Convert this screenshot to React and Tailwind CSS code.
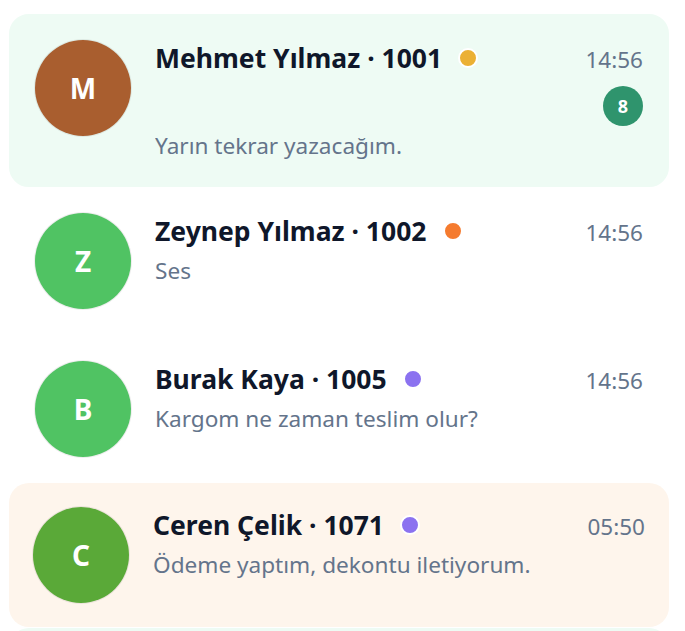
const chats = [
  {
    id: 1,
    initial: 'M',
    name: 'Mehmet Yılmaz · 1001',
    time: '14:56',
    preview: 'Yarın tekrar yazacağım.',
    avatar: 'bg-[#a95e2f]',
    dot: 'bg-[#ebb034]',
    unread: 8,
    card: 'bg-[#eefbf4] border-2 border-[#eefbf4]',
  },
  {
    id: 2,
    initial: 'Z',
    name: 'Zeynep Yılmaz · 1002',
    time: '14:56',
    preview: 'Ses',
    avatar: 'bg-[#50c363]',
    dot: 'bg-[#f57b2f]',
    card: 'bg-white border-2 border-white',
  },
  {
    id: 3,
    initial: 'B',
    name: 'Burak Kaya · 1005',
    time: '14:56',
    preview: 'Kargom ne zaman teslim olur?',
    avatar: 'bg-[#50c363]',
    dot: 'bg-[#8b72f0]',
    card: 'bg-white border-2 border-white',
  },
  {
    id: 4,
    initial: 'C',
    name: 'Ceren Çelik · 1071',
    time: '05:50',
    preview: 'Ödeme yaptım, dekontu iletiyorum.',
    avatar: 'bg-[#5aa938]',
    dot: 'bg-[#8b72f0]',
    card: 'bg-[#fef5ec]',
  },
];

const ChatRow = ({ chat }) => (
  <div className={`flex items-start gap-6 rounded-[20px] p-6 ${chat.card}`}>
    {/* Avatar */}
    <div
      className={`flex h-24 w-24 shrink-0 items-center justify-center rounded-full shadow-[0_0_0_1px_rgba(0,0,0,0.07)] ${chat.avatar}`}
    >
      <span className="text-[28px] font-bold text-white">{chat.initial}</span>
    </div>

    {/* Body */}
    <div className="min-w-0 flex-1">
      <div className="flex items-baseline justify-between">
        <div className="flex items-center">
          <span className="text-[26.5px] font-bold leading-[36px] text-[#0f172a]">
            {chat.name}
          </span>
          <span className={`ml-4 h-5 w-5 rounded-full border-2 border-white ${chat.dot}`} />
        </div>
        <span className="text-[22.5px] leading-[36px] text-[#64748b]">{chat.time}</span>
      </div>

      {chat.unread && (
        <div className="mt-2 flex justify-end">
          <span className="flex h-10 w-10 items-center justify-center rounded-full bg-[#2f946d] text-[18px] font-bold text-white">
            {chat.unread}
          </span>
        </div>
      )}

      <p className="mt-[5px] truncate text-[22.6px] leading-[30px] text-[#64748b]">
        {chat.preview}
      </p>
    </div>
  </div>
);

export default function App() {
  return (
    <div
      className="h-[631px] overflow-hidden bg-white pl-[9px] pr-[16px] pt-[14px]"
      style={{ fontFamily: '"Noto Sans", sans-serif' }}
    >
      <div className="flex flex-col">
        {chats.map((chat) => (
          <ChatRow key={chat.id} chat={chat} />
        ))}
        {/* Next item, cut off by the viewport */}
        <div className="mt-px h-24 rounded-[20px] bg-[#eefbf4]" />
      </div>
    </div>
  );
}
